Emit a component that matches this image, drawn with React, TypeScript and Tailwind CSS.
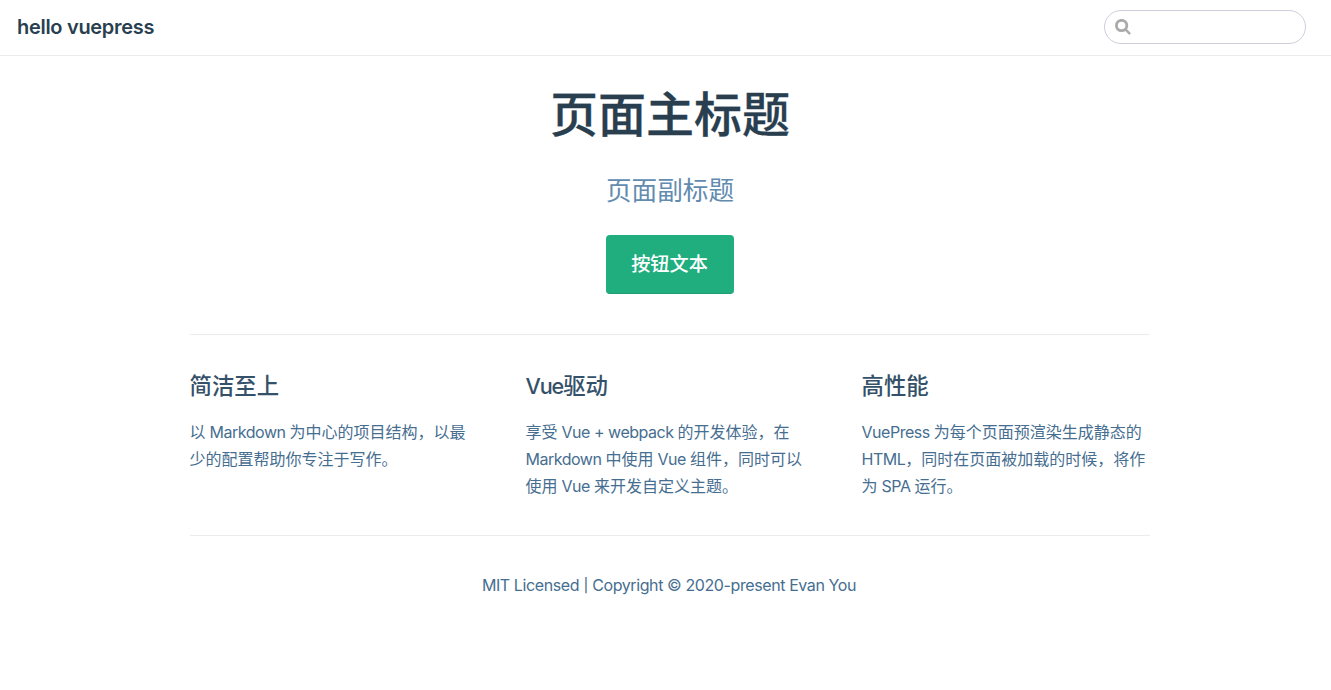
import { Fragment } from 'react';

const features = [
  { title: '简洁至上', lines: ['以 Markdown 为中心的项目结构，以最', '少的配置帮助你专注于写作。'] },
  { title: 'Vue驱动', lines: ['享受 Vue + webpack 的开发体验，在', 'Markdown 中使用 Vue 组件，同时可以', '使用 Vue 来开发自定义主题。'] },
  { title: '高性能', lines: ['VuePress 为每个页面预渲染生成静态的', 'HTML，同时在页面被加载的时候，将作', '为 SPA 运行。'] },
];

// Tightens the Latin runs of a mixed Chinese and English string.
function Mixed({ text, latin }: { text: string; latin: string }) {
  return (
    <>
      {text.split(/([\x20-\x7e]+)/).map((part, i) =>
        i % 2 ? <span key={i} className={latin}>{part}</span> : <Fragment key={i}>{part}</Fragment>,
      )}
    </>
  );
}

function Navbar() {
  return (
    <header className="flex h-14 items-center justify-between border-b border-[#eaecef] bg-white pr-[25px] pb-px pl-[17px]">
      <a className="text-[20px] leading-[34px] font-semibold tracking-[-0.3px] text-[#293f50]">hello vuepress</a>
      <label className="flex h-[34px] w-[202px] items-center rounded-full border border-[#cccfdb] bg-white pl-2.5">
        <svg className="h-4 w-4 shrink-0" viewBox="0 0 16 16" fill="none" stroke="#aaa" strokeWidth="2.8">
          <circle cx="6.6" cy="6.5" r="5.2" />
          <path d="M10.5 10.4L14.4 14.3" strokeLinecap="round" strokeWidth="2.4" />
        </svg>
        <input aria-label="Search" className="min-w-0 flex-1 bg-transparent px-2 outline-none" />
      </label>
    </header>
  );
}

export default function App() {
  return (
    <div className="min-h-[690px] bg-white font-['Inter','Noto_Sans_CJK_SC',sans-serif] text-[#293f50]">
      <Navbar />
      <main className="ml-[190px] w-[960px]">
        <section className="flex flex-col items-center pt-[29px]">
          <h1 className="text-[48px] leading-[60px] font-medium [-webkit-text-stroke:0.3px_#293f50]">页面主标题</h1>
          <p className="mt-[29px] text-[25.6px] leading-[33px] text-[#628bb0]">页面副标题</p>
          <a className="mt-[28px] flex h-[59px] w-32 items-center justify-center rounded-[4px] border-b border-[#1d9d72] bg-[#20ae7f] pt-px pr-px text-[19.2px] font-medium text-white">按钮文本</a>
        </section>
        <section className="mt-10 flex h-[201px] gap-12 border-t border-[#eaecef] pt-[35px]">
          {features.map((f) => (
            <div key={f.title} className="w-72">
              <h2 className="-ml-[0.5px] text-[22.4px] leading-[32px] font-medium text-[#355169]">
                <Mixed text={f.title} latin="text-[21.6px] tracking-[-1.1px]" />
              </h2>
              <p className="mt-[17px] -ml-[0.5px] text-[16px] leading-[27px] whitespace-nowrap text-[#466e90]">
                {f.lines.map((l) => (
                  <span key={l} className="block"><Mixed text={l} latin="tracking-[-0.48px]" /></span>
                ))}
              </p>
            </div>
          ))}
        </section>
        <footer className="border-t border-[#eaecef] pt-[36px] pr-0.5 text-center text-[16px] leading-[27px] tracking-[-0.4px] text-[#466e90]">
          MIT Licensed <span className="inline-block origin-center scale-y-85">|</span> Copyright © 2020-present Evan You
        </footer>
      </main>
    </div>
  );
}
